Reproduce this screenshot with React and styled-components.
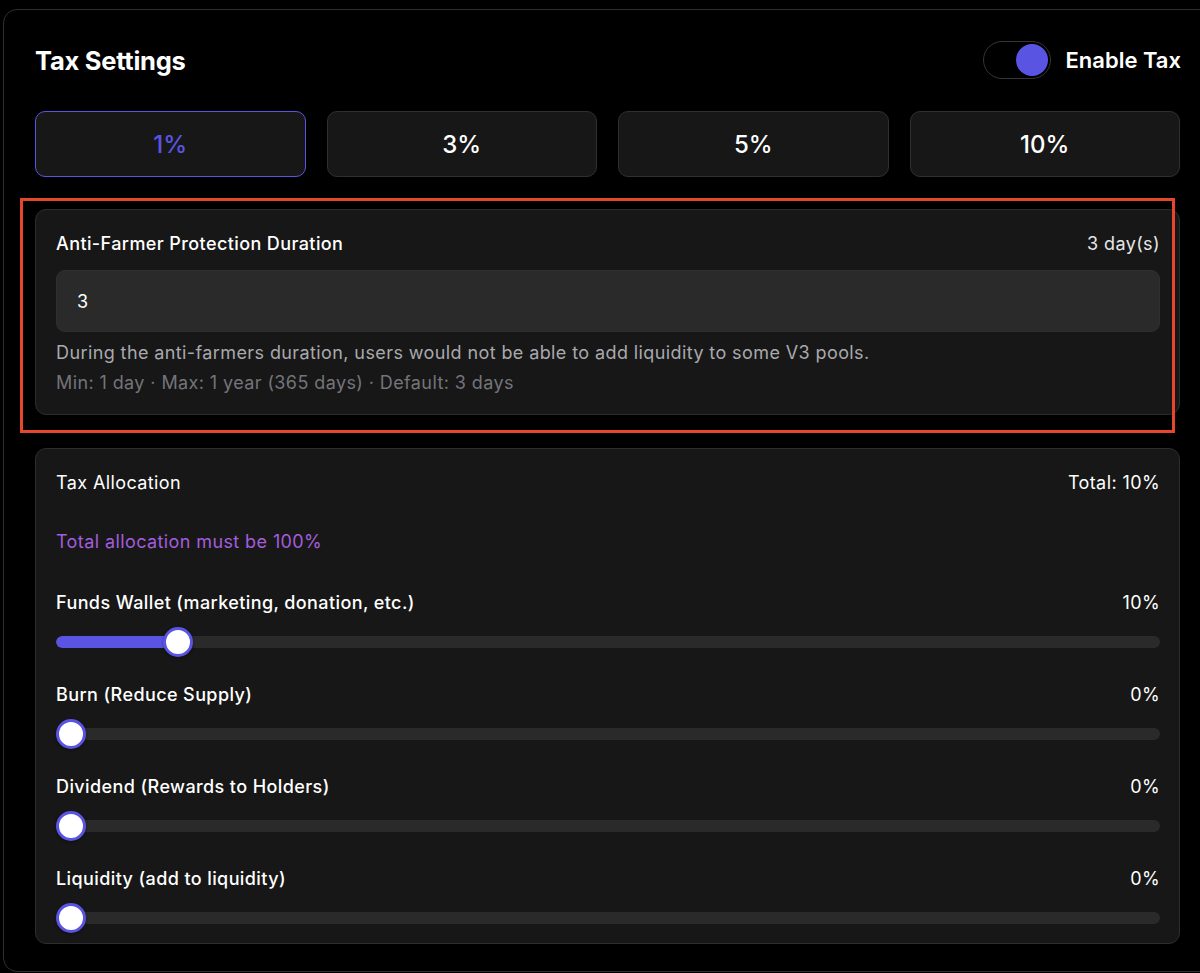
import { useState } from "react";
import styled, { createGlobalStyle } from "styled-components";

const GlobalStyle = createGlobalStyle`
  html, body {
    margin: 0;
    padding: 0;
    background: #000;
    overflow: hidden;
  }

  body {
    font-family: Inter, "Noto Sans", "Liberation Sans", sans-serif;
    color: #fff;
    -webkit-font-smoothing: antialiased;
  }
`;

const ACCENT = "#5a54e2";

const Panel = styled.section`
  box-sizing: border-box;
  margin: 9px 0 0 3px;
  width: 1230px;
  height: 963px;
  padding: 31px 31px 0;
  border: 1px solid #2f2f2f;
  border-radius: 14px;
  background: #000;
`;

const Inner = styled.div`
  width: 1145px;
  display: flex;
  flex-direction: column;
`;

const Header = styled.div`
  height: 38px;
  display: flex;
  align-items: center;
  justify-content: space-between;
`;

const Title = styled.h2`
  margin: 0;
  font-size: 25.5px;
  font-weight: 700;
  letter-spacing: -0.01em;
`;

const ToggleWrap = styled.label`
  display: flex;
  align-items: center;
  gap: 14px;
  margin-right: -1px;
  font-size: 22px;
  font-weight: 600;
  cursor: pointer;
`;

const Switch = styled.button`
  box-sizing: border-box;
  width: 68px;
  height: 38px;
  padding: 0 2px;
  border: 1.5px solid #353535;
  border-radius: 19px;
  background: #000;
  display: flex;
  align-items: center;
  justify-content: ${(p) => (p.$on ? "flex-end" : "flex-start")};
  cursor: pointer;
`;

const Knob = styled.span`
  width: 32px;
  height: 32px;
  border-radius: 50%;
  background: ${(p) => (p.$on ? ACCENT : "#555")};
`;

const Presets = styled.div`
  margin-top: 32px;
  display: grid;
  grid-template-columns: repeat(4, 1fr);
  gap: 21px;
`;

const Preset = styled.button`
  height: 66px;
  border-radius: 10px;
  border: 1.5px solid ${(p) => (p.$active ? ACCENT : "#303030")};
  background: #171717;
  color: ${(p) => (p.$active ? ACCENT : "#fff")};
  font-family: inherit;
  font-size: 24px;
  font-weight: 500;
  cursor: pointer;
`;

const HighlightWrap = styled.div`
  position: relative;
  margin-top: 32px;
`;

const Highlight = styled.div`
  position: absolute;
  left: -15px;
  top: -11px;
  width: 1155px;
  height: 235px;
  box-sizing: border-box;
  border: 3px solid #e4472c;
  pointer-events: none;
`;

const Card = styled.div`
  box-sizing: border-box;
  border: 1px solid #2d2d2d;
  border-radius: 11px;
  background: #171717;
  padding: ${(p) => p.$pad || "22px 19px 20px 20px"};
  margin-top: ${(p) => p.$mt || "0"};
`;

const Row = styled.div`
  display: flex;
  justify-content: space-between;
  align-items: center;
  height: 22px;
  font-size: 18px;
  letter-spacing: 0.4px;
  font-weight: ${(p) => p.$weight || 500};
`;

const Value = styled.span`
  font-weight: 400;
  color: ${(p) => p.$color || "#fff"};
`;

const Input = styled.input`
  box-sizing: border-box;
  width: 100%;
  height: 62px;
  margin-top: 16px;
  padding: 0 20px;
  border: 1px solid #2f2f2f;
  border-radius: 9px;
  background: #2a2a2a;
  color: #fff;
  font-family: inherit;
  font-size: 18px;
  outline: none;
`;

const Help = styled.p`
  margin: ${(p) => p.$mt || "10px"} 0 0;
  font-size: 18px;
  letter-spacing: 0.4px;
  line-height: 22px;
  color: ${(p) => p.$color || "#a9a9ad"};
`;

const Notice = styled.p`
  margin: 38px 0 0;
  height: 22px;
  line-height: 22px;
  font-size: 18px;
  letter-spacing: 0.4px;
  color: #a35ddd;
`;

const AllocList = styled.div`
  margin-top: 38px;
  display: flex;
  flex-direction: column;
  gap: 26px;
`;

const AllocItem = styled.div`
  display: flex;
  flex-direction: column;
  gap: 14px;
`;

const Slider = styled.div`
  position: relative;
  height: 30px;
  display: flex;
  align-items: center;
`;

const Track = styled.div`
  position: relative;
  width: 100%;
  height: 12px;
  border-radius: 6px;
  background: #2a2a2a;
  overflow: hidden;
`;

const Fill = styled.div`
  height: 100%;
  border-radius: 6px;
  background: ${ACCENT};
`;

const Thumb = styled.div`
  position: absolute;
  top: 0;
  box-sizing: border-box;
  width: 30px;
  height: 30px;
  border-radius: 50%;
  border: 3px solid ${ACCENT};
  background: #fff;
  box-shadow: 0 1px 3px rgba(0, 0, 0, 0.4);
`;

const TRACK_W = 1104;
const THUMB = 30;

function AllocSlider({ value }) {
  const center = THUMB / 2 + (value / 100) * (TRACK_W - THUMB);
  return (
    <Slider>
      <Track>
        <Fill style={{ width: value > 0 ? center : 0 }} />
      </Track>
      <Thumb style={{ left: center - THUMB / 2 }} />
    </Slider>
  );
}

const presets = [1, 3, 5, 10];

const allocations = [
  { label: "Funds Wallet (marketing, donation, etc.)", value: 10 },
  { label: "Burn (Reduce Supply)", value: 0 },
  { label: "Dividend (Rewards to Holders)", value: 0 },
  { label: "Liquidity (add to liquidity)", value: 0 },
];

export default function App() {
  const [enabled, setEnabled] = useState(true);
  const [rate, setRate] = useState(1);
  const [days, setDays] = useState("3");

  return (
    <>
      <GlobalStyle />
      <Panel>
        <Inner>
          <Header>
            <Title>Tax Settings</Title>
            <ToggleWrap>
              <Switch $on={enabled} onClick={() => setEnabled(!enabled)}>
                <Knob $on={enabled} />
              </Switch>
              Enable Tax
            </ToggleWrap>
          </Header>

          <Presets>
            {presets.map((p) => (
              <Preset key={p} $active={rate === p} onClick={() => setRate(p)}>
                {p}%
              </Preset>
            ))}
          </Presets>

          <HighlightWrap>
            <Card>
              <Row $weight={500}>
                <span>Anti-Farmer Protection Duration</span>
                <Value $color="#e6e6e6">{days || 0} day(s)</Value>
              </Row>
              <Input value={days} onChange={(e) => setDays(e.target.value)} />
              <Help>
                During the anti-farmers duration, users would not be able to
                add liquidity to some V3 pools.
              </Help>
              <Help $mt="8px" $color="#74747a">
                Min: 1 day · Max: 1 year (365 days) · Default: 3 days
              </Help>
            </Card>
            <Highlight />
          </HighlightWrap>

          <Card $mt="33px" $pad="22px 19px 10px 20px">
            <Row $weight={400}>
              <span>Tax Allocation</span>
              <Value>Total: 10%</Value>
            </Row>
            <Notice>Total allocation must be 100%</Notice>
            <AllocList>
              {allocations.map((a) => (
                <AllocItem key={a.label}>
                  <Row>
                    <span>{a.label}</span>
                    <Value>{a.value}%</Value>
                  </Row>
                  <AllocSlider value={a.value} />
                </AllocItem>
              ))}
            </AllocList>
          </Card>
        </Inner>
      </Panel>
    </>
  );
}
